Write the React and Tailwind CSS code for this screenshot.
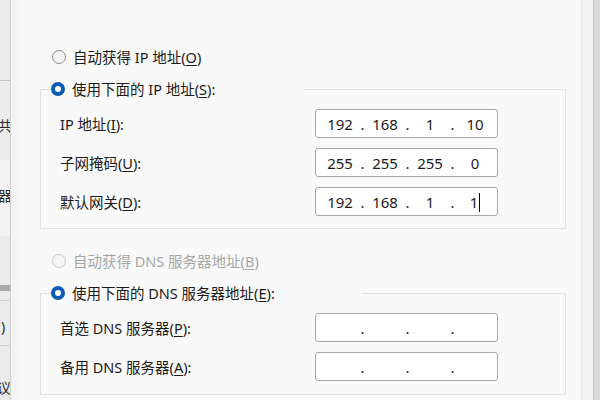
import React from 'react';

const FONT = "font-['Noto_Sans','Noto_Sans_CJK_SC',sans-serif]";

function Radio({ checked, disabled }) {
  if (checked) {
    return (
      <span className="flex h-[14px] w-[14px] shrink-0 items-center justify-center rounded-full bg-[#0a5cb5]">
        <span className="h-[6px] w-[6px] rounded-full bg-white" />
      </span>
    );
  }
  return (
    <span
      className={`h-[14px] w-[14px] shrink-0 rounded-full border ${
        disabled ? 'border-[#c9c9c9] bg-[#f6f6f6]' : 'border-[#8c8c8c] bg-[#f3f3f3]'
      }`}
    />
  );
}

function Key({ children }) {
  return <span className="underline decoration-1 underline-offset-[2px]">{children}</span>;
}

function RadioLabel({ checked, disabled, children }) {
  return (
    <div className="flex h-[18px] items-center gap-[7px] leading-[18px]">
      <Radio checked={checked} disabled={disabled} />
      <span className={disabled ? 'text-[#a6a6a6]' : 'text-[#1b1b1b]'}>{children}</span>
    </div>
  );
}

function IpBox({ parts, cursor }) {
  return (
    <div className="flex h-[29px] w-[183px] items-center rounded-[3px] border border-[#a7a7a7] bg-white pl-[3px] text-[15px] text-[#1b1b1b]">
      {parts.map((p, i) => (
        <React.Fragment key={i}>
          <span className="flex w-[42px] justify-center leading-[20px]">
            {p}
            {cursor && i === 3 && <span className="ml-[1px] mt-[1px] inline-block h-[19px] w-px bg-black" />}
          </span>
          {i < 3 && <span className="flex w-[3px] justify-center leading-[20px]">.</span>}
        </React.Fragment>
      ))}
    </div>
  );
}

function Row({ label, parts, cursor }) {
  return (
    <div className="flex items-center">
      <span className="w-[274px] pl-[19px] leading-[18px] text-[#1b1b1b]">{label}</span>
      <IpBox parts={parts} cursor={cursor} />
    </div>
  );
}

function Group({ legendWidth, legend, pb, children }) {
  return (
    <fieldset className="w-[526px] border border-[#e2e2e2] p-0">
      <legend className="ml-[10px] p-0" style={{ width: legendWidth }}>
        {legend}
      </legend>
      <div className="flex flex-col gap-[10px] pt-[11px]" style={{ paddingBottom: pb }}>
        {children}
      </div>
    </fieldset>
  );
}

function LeftStrip() {
  return (
    <div className="flex w-[10px] shrink-0 flex-col overflow-hidden bg-[#ebebeb] text-[14px] leading-[18px] text-[#2a2a2a]">
      <div className="h-[80px] shrink-0" />
      <div className="h-px shrink-0 bg-[#c4c4c4]" />
      <div className="h-[79px] shrink-0 pt-[36px]">
        <span className="-ml-[2px] whitespace-nowrap">共</span>
      </div>
      <div className="h-[76px] shrink-0 bg-[#f3f3f3] pt-[27px]">
        <span className="-ml-[2px] whitespace-nowrap">器</span>
      </div>
      <div className="h-[49px] shrink-0" />
      <div className="h-[6px] shrink-0 bg-[#a9a9a9]" />
      <div className="h-[9px] shrink-0" />
      <div className="h-px shrink-0 bg-[#d3d3d3]" />
      <div className="h-[44px] shrink-0 pt-[17px]">
        <span className="ml-[1px]">)</span>
      </div>
      <div className="h-px shrink-0 bg-[#d3d3d3]" />
      <div className="shrink-0 pt-[33px]">
        <span className="-ml-[3px] whitespace-nowrap">议:</span>
      </div>
    </div>
  );
}

export default function App() {
  return (
    <div className={`flex h-[400px] w-[600px] overflow-hidden bg-[#f9f9f9] text-[14.5px] ${FONT}`}>
      <LeftStrip />
      <div className="w-[10px] shrink-0 border-l border-[#cfcfcf] bg-[#f4f4f4]" />

      <div className="flex-1 pl-[20px] pt-[48px]">
        <div className="ml-[12px]">
          <RadioLabel>
            自动获得 IP 地址(<Key>O</Key>)
          </RadioLabel>
        </div>

        <div className="mt-[14px]">
          <Group
            legendWidth={252}
            pb={12}
            legend={
              <RadioLabel checked>
                使用下面的 IP 地址(<Key>S</Key>):
              </RadioLabel>
            }
          >
            <Row label={<>IP 地址(<Key>I</Key>):</>} parts={['192', '168', '1', '10']} />
            <Row label={<>子网掩码(<Key>U</Key>):</>} parts={['255', '255', '255', '0']} />
            <Row label={<>默认网关(<Key>D</Key>):</>} parts={['192', '168', '1', '1']} cursor />
          </Group>
        </div>

        <div className="ml-[12px] mt-[23px]">
          <RadioLabel disabled>
            自动获得 DNS 服务器地址(<Key>B</Key>)
          </RadioLabel>
        </div>

        <div className="mt-[14px]">
          <Group
            legendWidth={311}
            pb={13}
            legend={
              <RadioLabel checked>
                使用下面的 DNS 服务器地址(<Key>E</Key>):
              </RadioLabel>
            }
          >
            <Row label={<>首选 DNS 服务器(<Key>P</Key>):</>} parts={['', '', '', '']} />
            <Row label={<>备用 DNS 服务器(<Key>A</Key>):</>} parts={['', '', '', '']} />
          </Group>
        </div>
      </div>

      <div className="w-px shrink-0 bg-[#e4e4e4]" />
      <div className="w-[11px] shrink-0 bg-[#f1f1f1]" />
      <div className="w-[7px] shrink-0 border-l border-[#c9c9c9] bg-[#d9d9d9]" />
    </div>
  );
}
